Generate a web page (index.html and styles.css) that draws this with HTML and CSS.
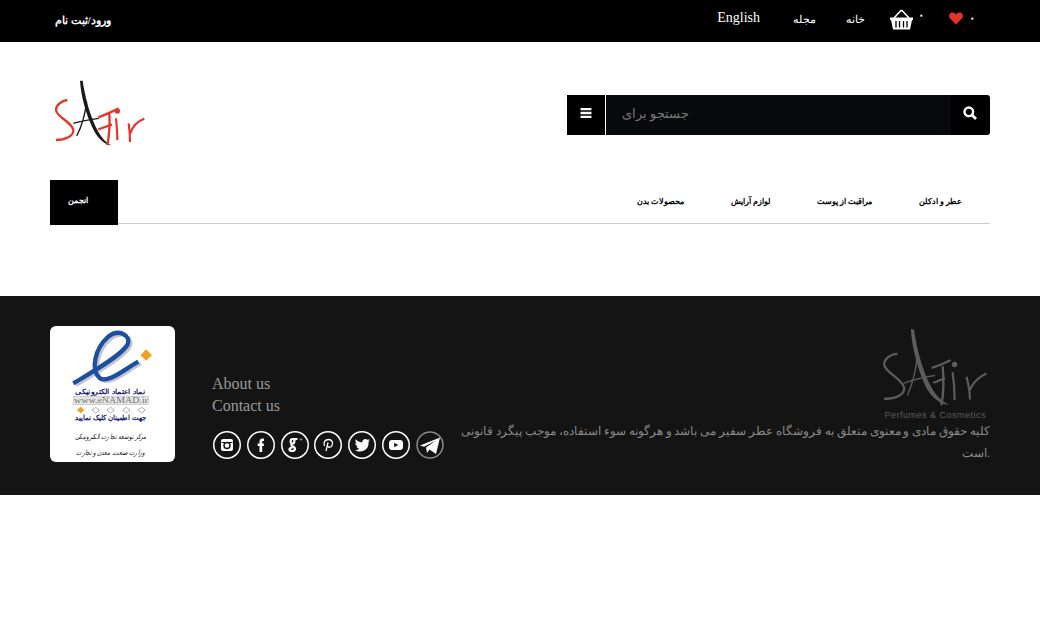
FILE: index.html
```html
<!DOCTYPE html>
<html lang="fa">
<head>
    <meta charset="UTF-8">
    <meta name="viewport" content="width=device-width, initial-scale=1.0">
    <title>Safir</title>
    <link rel="stylesheet" href="styles.css">
</head>
<body>
    <div class="topbar">
        <a class="login" href="#">ورود/ثبت نام</a>
        <div class="top-links">
            <a class="lang" href="#">English</a>
            <a class="top-link link-mag" href="#">مجله</a>
            <a class="top-link link-home" href="#">خانه</a>
            <svg class="basket" viewBox="0 0 23 21" width="23" height="21">
                <path d="M4 9 L11 1.5 L12 1.5 L19 9" fill="none" stroke="#fff" stroke-width="1.6"/>
                <path d="M0 8.500 H23 V11 H22 L20 20.500 H3 L1 11 H0 Z" fill="#fff"/>
                <path d="M6 12 V18.500 M9.500 12 V18.500 M13.500 12 V18.500 M17 12 V18.500" stroke="#000" stroke-width="1.300"/>
            </svg>
            <span class="count count-basket">۰</span>
            <svg class="heart" viewBox="0 0 14 13" width="14" height="13">
                <path d="M7 12.500 L1 6.500 C-1 4 .5 .5 3.500 .5 C5 .5 6.300 1.300 7 2.500 C7.700 1.300 9 .5 10.500 .5 C13.500 .5 15 4 13 6.500 Z" fill="#e5322d"/>
            </svg>
            <span class="count">۰</span>
        </div>
    </div>

    <div class="header">
        <svg class="logo" viewBox="60 51 300 210" width="100" height="70">
            <path d="M112 120 C95 122 78 135 78 150 C80 172 125 185 130 210 C132 228 105 240 78 240" fill="none" stroke="#e5352b" stroke-width="7"/>
            <path d="M150 62 L158 62 C165 110 180 170 205 215 C218 238 232 250 245 256 C222 254 200 232 186 200 C168 160 153 110 150 62 Z" fill="#1a1a1a"/>
            <path d="M170 125 C165 165 155 200 140 228 M130 190 C155 182 185 178 207 175" fill="none" stroke="#1a1a1a" stroke-width="4"/>
            <path d="M205 172 C225 165 245 155 266 146 M205 208 C218 204 232 198 246 194 M238 160 C240 195 238 225 232 256" fill="none" stroke="#e5352b" stroke-width="7"/>
            <circle cx="262" cy="153" r="8" fill="#e5352b"/>
            <path d="M258 175 C260 195 262 215 262 240 M296 190 C299 210 300 228 300 246 M300 222 C308 198 325 182 343 176" fill="none" stroke="#e5352b" stroke-width="6.500"/>
        </svg>
        <form class="search">
            <button class="search-menu" type="button">
                <svg viewBox="0 0 12 11" width="12" height="10"><path d="M0 0 H12 V2.500 H0 Z M0 4.250 H12 V6.750 H0 Z M0 8.500 H12 V11 H0 Z" fill="#fff"/></svg>
            </button>
            <input class="search-input" type="text" placeholder="جستجو برای">
            <button class="search-btn" type="button">
                <svg viewBox="0 0 14 14" width="14" height="14"><circle cx="5.800" cy="5.800" r="4.300" fill="none" stroke="#fff" stroke-width="2.400"/><path d="M9 9 L13 13" stroke="#fff" stroke-width="2.800"/></svg>
            </button>
        </form>
    </div>

    <div class="nav">
        <a class="nav-item" href="#">عطر و ادکلن</a>
        <a class="nav-item" href="#">مراقبت از پوست</a>
        <a class="nav-item" href="#">لوازم آرایش</a>
        <a class="nav-item" href="#">محصولات بدن</a>
        <a class="nav-tab" href="#">انجمن</a>
    </div>

    <div class="footer">
        <div class="badge">
            <svg viewBox="30 18 375 408" width="125" height="136">
                <path d="M108 196 C158 166 248 116 270 81 C283 51 243 31 213 56 C173 91 158 156 188 181 C213 196 258 156 303 131" fill="none" stroke="#c4c4cc" stroke-width="10"/>
                <path d="M100 190 C150 160 240 110 262 75 C275 45 235 25 205 50 C165 85 150 150 180 175 C205 190 250 150 295 125" fill="none" stroke="#1c4fa0" stroke-width="13"/>
                <path d="M318 88 L336 106 L318 122 L302 106 Z" fill="#f0a020"/>
                <text class="bd-navy" x="210" y="222" text-anchor="middle" textLength="210" lengthAdjust="spacingAndGlyphs">نماد اعتماد الکترونیکی</text>
                <rect x="100" y="229" width="226" height="25" fill="#e4e4e4" stroke="#999"/>
                <text class="bd-url" x="213" y="250" text-anchor="middle" textLength="222" lengthAdjust="spacingAndGlyphs">www.eNAMAD.ir</text>
                <path d="M122 260 L133 270 L122 280 L111 270 Z" fill="#f0a020"/>
                <path d="M167 262 L178 270 L167 279 L156 270 Z M212 262 L223 270 L212 279 L201 270 Z M259 262 L270 270 L259 279 L248 270 Z M305 262 L316 270 L305 279 L294 270 Z" fill="#fff" stroke="#888" stroke-width="2"/>
                <text class="bd-navy" x="212" y="301" text-anchor="middle" textLength="213" lengthAdjust="spacingAndGlyphs">جهت اطمینان کلیک نمایید</text>
                <text class="bd-ink" x="212" y="357" text-anchor="middle" textLength="215" lengthAdjust="spacingAndGlyphs">مرکز توسعه تجارت الکترونیکی</text>
                <text class="bd-small" x="212" y="405" text-anchor="middle" textLength="207" lengthAdjust="spacingAndGlyphs">وزارت صنعت، معدن و تجارت</text>
            </svg>
        </div>
        <div class="footer-links">
            <a href="#">About us</a>
            <a href="#">Contact us</a>
            <div class="social">
                <svg viewBox="0 0 28 28" width="28" height="28"><circle cx="14" cy="14" r="13.250" class="ring"/><rect x="8" y="8" width="12" height="12" rx="2" fill="#fff"/><circle cx="14" cy="14.500" r="3" fill="none" stroke="#141414" stroke-width="1.500"/><path d="M8.500 11.500 H19.500" stroke="#141414"/></svg>
                <svg viewBox="0 0 28 28" width="28" height="28"><circle cx="14" cy="14" r="13.250" class="ring"/><path d="M12.500 21 V15 H10.700 V12.500 H12.500 V10.500 C12.500 8 14 7 17 7.500 V10 C15.500 9.800 15.200 10.200 15.200 11 V12.500 H17 L16.700 15 H15.200 V21 Z" fill="#fff"/></svg>
                <svg viewBox="0 0 28 28" width="28" height="28"><circle cx="14" cy="14" r="13.250" class="ring"/><path d="M16.500 8 H11.500 C9 8 9 12.500 11.500 12.500 C14 12.500 14 8.500 12 8.200 M11 13 C9.500 14 11 15 12 15.500 C15 17 14.500 20 11 20 C7.500 20 7.500 17 11.500 16.500" fill="none" stroke="#fff" stroke-width="2.200"/><path d="M18.500 8.500 H21.500 M20 7 V10" stroke="#aaa" stroke-width=".7"/></svg>
                <svg viewBox="0 0 28 28" width="28" height="28"><circle cx="14" cy="14" r="13.250" class="ring"/><path d="M10.500 15 C9 11.500 11 8.500 14.500 8.500 C18 8.500 19.500 11.500 18 14.500 C17 16.500 14.500 16.800 13.500 15.200 M14 11.500 L12 20" fill="none" stroke="#fff" stroke-width="1.300"/></svg>
                <svg viewBox="0 0 28 28" width="28" height="28"><circle cx="14" cy="14" r="13.250" class="ring"/><path d="M22 9.200 C21.300 9.500 20.700 9.700 20 9.800 C20.700 9.300 21.300 8.700 21.500 8 C20.800 8.400 20.100 8.700 19.300 8.800 C17.500 7 14 8.300 14.200 11.500 C11.500 11.300 9.300 10 7.800 8.300 C7 9.800 7.500 11.500 8.800 12.500 C8.200 12.500 7.700 12.300 7.300 12.100 C7.300 13.800 8.400 15 10 15.400 C9.500 15.500 9 15.500 8.500 15.400 C9 16.800 10.200 17.600 11.600 17.700 C10.200 18.800 8.600 19.200 7 19 C13.500 23 21.500 18.500 20.500 11 C21.100 10.500 21.600 9.900 22 9.200 Z" fill="#fff"/></svg>
                <svg viewBox="0 0 28 28" width="28" height="28"><circle cx="14" cy="14" r="13.250" class="ring"/><rect x="7" y="9" width="14" height="10" rx="3" fill="#fff"/><path d="M12.200 11.800 L16.200 14 L12.200 16.200 Z" fill="#141414"/></svg>
                <svg viewBox="0 0 28 28" width="28" height="28"><circle cx="14" cy="14" r="13" fill="none" stroke="#8a8a8a" stroke-width="1.500"/><path d="M4 14.500 L24 6.500 L20 23 L13.500 18.500 L11 22 L10 16.500 L20 9.500 L8 15.800 Z" fill="#fff"/></svg>
            </div>
        </div>
        <div class="footer-about">
            <svg class="footer-logo" viewBox="60 25 330 250" width="110" height="83">
                <path d="M112 102 C90 104 72 118 72 135 C75 160 125 175 132 205 C135 225 105 240 72 238" fill="none" stroke="#5c5c5c" stroke-width="7"/>
                <path d="M152 28 L162 30 C170 90 190 160 215 205 C228 230 248 248 268 256 C242 256 212 235 194 195 C172 145 156 85 152 28 Z" fill="#5c5c5c"/>
                <path d="M172 100 C170 150 158 190 142 228 M130 192 C160 180 195 172 225 168" fill="none" stroke="#5c5c5c" stroke-width="4"/>
                <path d="M215 145 C235 140 255 130 272 122 M220 190 C232 185 245 180 255 176 M248 140 C252 185 252 220 244 258" fill="none" stroke="#5c5c5c" stroke-width="7"/>
                <circle cx="284" cy="135" r="8" fill="#5c5c5c"/>
                <path d="M278 158 C282 185 284 210 284 242 M320 172 C326 195 330 220 330 240 M330 212 C338 190 360 170 380 162" fill="none" stroke="#5c5c5c" stroke-width="6.500"/>
            </svg>
            <div class="footer-tag">Perfumes &amp; Cosmetics</div>
            <p class="footer-text">کلیه حقوق مادی و معنوی متعلق به فروشگاه عطر سفیر می باشد و هرگونه سوء استفاده، موجب پیگرد قانونی است.</p>
        </div>
    </div>
</body>
</html>
```

FILE: styles.css
```css
body {
    margin: 0;
    padding: 0;
    background-color: #fff;
    font-family: "Liberation Serif", serif;
}

a {
    text-decoration: none;
}

.topbar {
    height: 42px;
    background-color: #000;
    display: flex;
    justify-content: space-between;
    align-items: center;
    padding: 0 65px 6px 55px;
    box-sizing: border-box;
}

.login {
    color: #fff;
    font-size: 10.500px;
    font-weight: bold;
    margin-top: 3px;
}

.top-links {
    display: flex;
    align-items: center;
}

.lang {
    color: #fff;
    font-size: 14px;
    margin-right: 33px;
}

.top-link {
    color: #fff;
    font-size: 10.500px;
    margin-top: 2px;
}

.link-mag {
    margin-right: 30px;
}

.link-home {
    margin-right: 25px;
}

.basket {
    margin-top: 3px;
}

.count {
    color: #fff;
    font-size: 12px;
    font-weight: bold;
    margin-left: 6px;
}

.count-basket {
    margin-left: 5px;
    margin-right: 25px;
    margin-top: -6px;
}

.header {
    display: flex;
    justify-content: space-between;
    padding: 35px 50px 0;
    height: 103px;
}

.logo {
    display: block;
}

.search {
    display: flex;
    width: 423px;
    height: 40px;
    margin: 18px 0 0;
}

.search-menu {
    width: 39px;
    background-color: #000;
    border: none;
    border-right: 1px solid #fff;
    padding: 0 0 3px;
}

.search-input {
    flex: 1;
    min-width: 0;
    background-color: #08090d;
    border: none;
    padding: 0 16px 2px;
    font-family: inherit;
    font-size: 13px;
    color: #fff;
}

.search-input::placeholder {
    color: #777;
}

.search-btn {
    width: 39px;
    background-color: #000;
    border: none;
    border-radius: 0 3px 3px 0;
    padding: 0 1px 2px 0;
}

.nav {
    direction: rtl;
    display: flex;
    align-items: center;
    height: 43px;
    margin: 0 50px;
    padding-right: 4.500px;
    border-bottom: 1px solid #ccc;
}

.nav-item {
    color: #000;
    font-size: 8.300px;
    font-weight: bold;
    padding: 0 23.500px 2px;
}

.nav-tab {
    margin-right: auto;
    margin-bottom: -2px;
    width: 68px;
    height: 45px;
    line-height: 41px;
    padding-right: 13px;
    box-sizing: border-box;
    background-color: #000;
    color: #fff;
    font-size: 8.300px;
    font-weight: bold;
    text-align: center;
}

.footer {
    margin-top: 72px;
    height: 199px;
    box-sizing: border-box;
    background-color: #141414;
    padding: 30px 50px 0;
    display: flex;
}

.badge {
    width: 125px;
    height: 136px;
    background-color: #fff;
    border-radius: 6px;
    overflow: hidden;
}

.badge svg {
    display: block;
}

.bd-navy {
    font-size: 21px;
    font-weight: bold;
    fill: #14146e;
}

.bd-url {
    font-size: 26px;
    fill: #777;
}

.bd-ink {
    font-size: 22px;
    font-style: italic;
    fill: #222;
}

.bd-small {
    font-size: 22px;
    font-style: italic;
    fill: #222;
}

.footer-links {
    margin-left: 37px;
    padding-top: 47px;
    width: 238px;
    flex-shrink: 0;
}

.footer-links a {
    display: block;
    color: #999;
    font-size: 16px;
    line-height: 22px;
}

.social {
    display: flex;
    gap: 5.800px;
    margin-top: 14px;
    margin-left: 1px;
}

.ring {
    fill: none;
    stroke: #fff;
    stroke-width: 1.500;
}

.footer-about {
    flex: 1;
    margin-left: 5px;
    text-align: right;
}

.footer-logo {
    display: block;
    margin: 2px 0 0 auto;
}

.footer-tag {
    font-family: "Liberation Sans", sans-serif;
    font-size: 9px;
    letter-spacing: .5px;
    color: #5c5c5c;
    margin-right: 4px;
    line-height: 9px;
}

.footer-text {
    margin: 0;
    direction: ltr;
    color: #888;
    font-size: 11.500px;
    line-height: 22px;
}
```
